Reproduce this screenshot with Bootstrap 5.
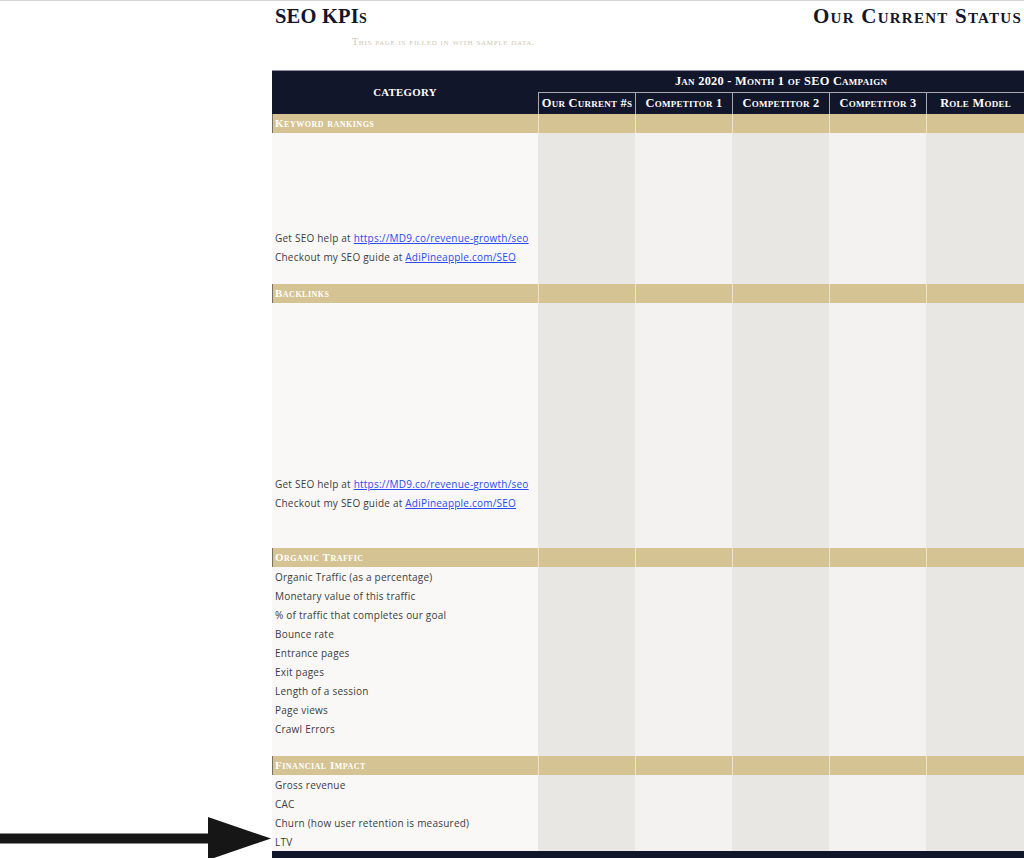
<!DOCTYPE html>
<html lang="en">
<head>
<meta charset="utf-8">
<title>SEO KPIs</title>
<link href="https://cdn.jsdelivr.net/npm/bootstrap@5.3.0/dist/css/bootstrap.min.css" rel="stylesheet">
<style>
html, body { height: 858px; overflow: hidden; background: #fff; }
.sheet { padding-left: 272px; border-top: 1px solid #d6d6d6; height: 858px; }
.serif { font-family: "Liberation Serif", serif; font-variant: small-caps; font-weight: 700; }
.title-row { height: 69px; color: #12162b; }
.page-title { font-size: 20.5px; letter-spacing: .2px; line-height: 24px; padding-top: 3px; margin: 0 0 0 3px; }
.page-status { font-size: 21px; letter-spacing: 1.25px; line-height: 24px; padding-top: 3px; margin: 0 2px 0 0; }
.sample-note { font-size: 10px; font-weight: 400; letter-spacing: .66px; color: #cfc8b5; margin: 7px 0 0 80px; line-height: 14px; }
.kpi { table-layout: fixed; width: 752px; border-collapse: separate; border-spacing: 0; margin: 0; }
.kpi th, .kpi td { padding: 0; border: 0; }
.kpi thead th { background: #12162b; color: #fff; text-align: center; vertical-align: middle; font-size: 12.4px; letter-spacing: .25px; }
.kpi .h-cat { font-size: 10.8px; letter-spacing: .3px; }
.kpi .h-top { height: 22px; box-shadow: inset 0 1px 0 #8a8c96; }
.kpi .h-sub { height: 22px; border-left: 1px solid #a9a9ae; border-top: 1px solid #a9a9ae; }
.kpi .sect td { height: 19px; background: #d5c394; border-left: 1px solid #ece3cb; }
.kpi .sect td:first-child { border-left: 1px solid #77715f; color: #fff; font-size: 11px; letter-spacing: .5px; padding-left: 2px; line-height: 18px; }
.kpi .body-row td { vertical-align: top; }
.kpi .cat { background: #f9f8f6; padding-left: 3px; }
.kpi .shade-a { background: #e8e7e3; }
.kpi .shade-b { background: #f3f2f0; }
.line { height: 19px; line-height: 20px; font-family: "Open Sans", sans-serif; font-size: 10px; letter-spacing: .22px; color: #3c3c3c; white-space: nowrap; }
.line a { color: #2a4bf0; }
.foot-bar td { height: 7px; background: #12162b; }
.pointer { position: absolute; left: 0; top: 810px; }
</style>
</head>
<body>
<div class="sheet">
  <div class="title-row d-flex justify-content-between align-items-start">
    <div>
      <h1 class="page-title serif">SEO KPIs</h1>
      <div class="sample-note serif">This page is filled in with sample data.</div>
    </div>
    <h2 class="page-status serif">Our Current Status</h2>
  </div>
  <table class="table kpi">
    <colgroup>
      <col style="width:266px"><col style="width:97px"><col style="width:97px"><col style="width:97px"><col style="width:97px"><col style="width:98px">
    </colgroup>
    <thead>
      <tr>
        <th class="serif h-top h-cat" rowspan="2">CATEGORY</th>
        <th class="serif h-top" colspan="5">Jan 2020 - Month 1 of SEO Campaign</th>
      </tr>
      <tr>
        <th class="serif h-sub">Our Current #s</th>
        <th class="serif h-sub">Competitor 1</th>
        <th class="serif h-sub">Competitor 2</th>
        <th class="serif h-sub">Competitor 3</th>
        <th class="serif h-sub">Role Model</th>
      </tr>
    </thead>
    <tbody>
      <tr class="sect"><td class="serif">Keyword rankings</td><td></td><td></td><td></td><td></td><td></td></tr>
      <tr class="body-row" style="height:151px">
        <td class="cat">
          <div class="line"></div><div class="line"></div><div class="line"></div><div class="line"></div><div class="line"></div>
          <div class="line">Get SEO help at <a href="#">https://MD9.co/revenue-growth/seo</a></div>
          <div class="line">Checkout my SEO guide at <a href="#">AdiPineapple.com/SEO</a></div>
        </td>
        <td class="shade-a"></td><td class="shade-b"></td><td class="shade-a"></td><td class="shade-b"></td><td class="shade-a"></td>
      </tr>
      <tr class="sect"><td class="serif">Backlinks</td><td></td><td></td><td></td><td></td><td></td></tr>
      <tr class="body-row" style="height:245px">
        <td class="cat">
          <div class="line"></div><div class="line"></div><div class="line"></div><div class="line"></div><div class="line"></div><div class="line"></div><div class="line"></div><div class="line"></div><div class="line"></div>
          <div class="line">Get SEO help at <a href="#">https://MD9.co/revenue-growth/seo</a></div>
          <div class="line">Checkout my SEO guide at <a href="#">AdiPineapple.com/SEO</a></div>
        </td>
        <td class="shade-a"></td><td class="shade-b"></td><td class="shade-a"></td><td class="shade-b"></td><td class="shade-a"></td>
      </tr>
      <tr class="sect"><td class="serif">Organic Traffic</td><td></td><td></td><td></td><td></td><td></td></tr>
      <tr class="body-row" style="height:189px">
        <td class="cat">
          <div class="line">Organic Traffic (as a percentage)</div>
          <div class="line">Monetary value of this traffic</div>
          <div class="line">% of traffic that completes our goal</div>
          <div class="line">Bounce rate</div>
          <div class="line">Entrance pages</div>
          <div class="line">Exit pages</div>
          <div class="line">Length of a session</div>
          <div class="line">Page views</div>
          <div class="line">Crawl Errors</div>
        </td>
        <td class="shade-a"></td><td class="shade-b"></td><td class="shade-a"></td><td class="shade-b"></td><td class="shade-a"></td>
      </tr>
      <tr class="sect"><td class="serif">Financial Impact</td><td></td><td></td><td></td><td></td><td></td></tr>
      <tr class="body-row" style="height:76px">
        <td class="cat">
          <div class="line">Gross revenue</div>
          <div class="line">CAC</div>
          <div class="line">Churn (how user retention is measured)</div>
          <div class="line">LTV</div>
        </td>
        <td class="shade-a"></td><td class="shade-b"></td><td class="shade-a"></td><td class="shade-b"></td><td class="shade-a"></td>
      </tr>
      <tr class="foot-bar"><td colspan="6"></td></tr>
    </tbody>
  </table>
</div>
<svg class="pointer" width="272" height="48" viewBox="0 0 272 48" aria-hidden="true">
  <path fill="#161616" d="M0 23.500H208V7L271 28.500L208 50V33.500H0Z"/>
</svg>
</body>
</html>
